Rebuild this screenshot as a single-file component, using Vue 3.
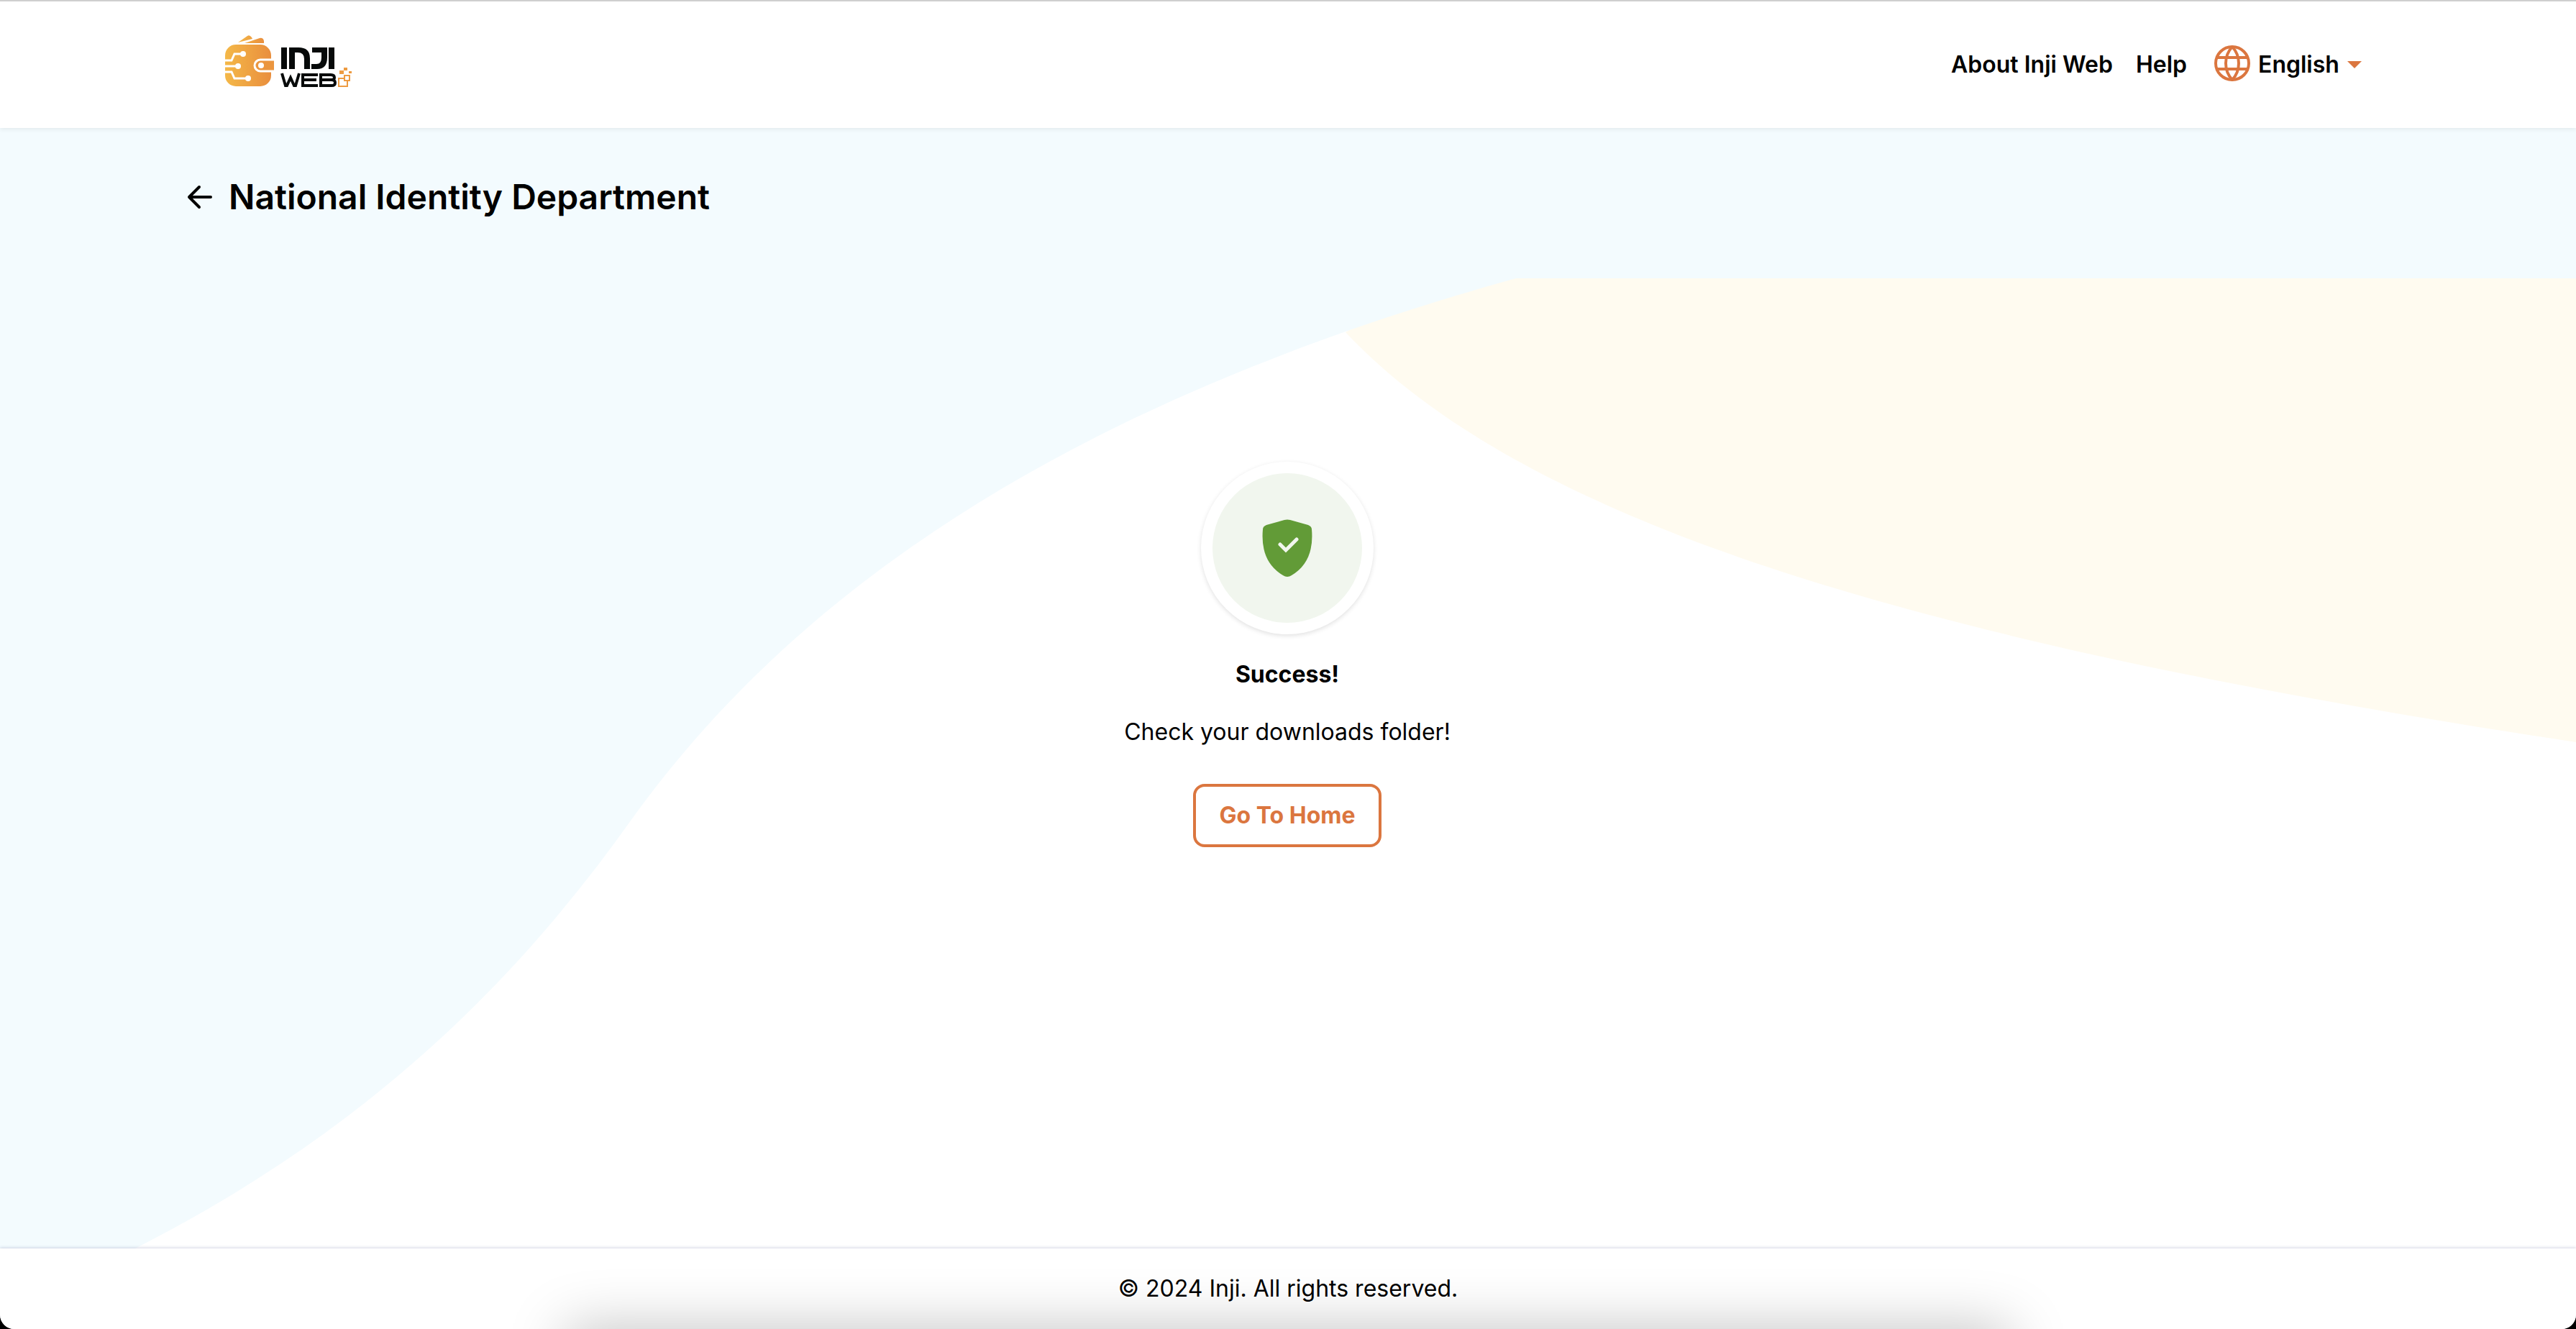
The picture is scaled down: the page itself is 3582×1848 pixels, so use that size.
<script setup>
const year = 2024
const languages = ['English']
</script>

<template>
  <div class="page">
    <header class="header">
      <a class="brand" href="#" aria-label="Inji Web">
        <svg class="logo" viewBox="0 0 180 76" fill="none">
          <defs>
            <linearGradient id="wallet" x1="0" y1="0" x2="1" y2="0">
              <stop offset="0" stop-color="#f4b848" />
              <stop offset="1" stop-color="#e98e3d" />
            </linearGradient>
          </defs>
          <path d="M18 11 31 2q3-2 6 2l1 2zM27 12 48 5q5-1 6 4v3z" fill="url(#wallet)" />
          <rect x="0" y="14" width="64" height="58" rx="15" fill="url(#wallet)" />
          <path d="M68 35H49a8 8 0 0 0 0 16h19" fill="#eb963f" stroke="#fff" stroke-width="3" />
          <path d="M0 36h9l4-9h12M0 44h18M0 52h9l4 9h19" stroke="#fff" stroke-width="3" />
          <g fill="#fff">
            <circle cx="25" cy="27" r="4" />
            <circle cx="18" cy="44" r="4" />
            <circle cx="32" cy="61" r="4" />
            <circle cx="50" cy="43" r="4" />
          </g>
          <g fill="#070a0a">
            <path d="M78 18h8v30h-8zM144 18h8v30h-8z" />
            <path d="M89 48V18h13q16 0 16 15v15h-8V34q0-9-9-9h-4v23z" />
            <path d="M121 18h21v14q0 16-14 16h-8v-7h7q7 0 7-9v-7h-13z" />
          </g>
          <g stroke="#070a0a" stroke-width="4">
            <path d="M79 54l5 17h2l5-11 5 11h2l5-17" />
            <path d="M129 56h-21v15h21M108 63h19" />
            <path d="M133 56h14q5 0 5 4 0 3-4 3h-15M133 54v17h15q5 0 5-4t-5-4" />
          </g>
          <g stroke="#ed9b42" stroke-width="2">
            <rect x="158" y="61" width="12" height="11" />
            <rect x="166" y="57" width="7" height="7" fill="#fff" />
          </g>
          <path d="M159 50h6v5h-6zM165 46h5v4h-5zM172 51h4v3h-4z" fill="#ed9b42" />
        </svg>
      </a>
      <nav class="nav">
        <a href="#about">About Inji Web</a>
        <a href="#help">Help</a>
        <label class="language">
          <svg class="globe" viewBox="0 0 50 50" fill="none" stroke="#db763f" stroke-width="4">
            <circle cx="25" cy="25" r="23" />
            <path d="M25 2C13 15 13 35 25 48C37 35 37 15 25 2M4 17h42M4 33h42" />
          </svg>
          <select aria-label="Language">
            <option v-for="item in languages" :key="item">{{ item }}</option>
          </select>
          <svg class="caret" viewBox="0 0 20 10"><path d="M0 0h20L10 10z" fill="#db763f" /></svg>
        </label>
      </nav>
    </header>

    <div class="title-bar">
      <button class="back" type="button" aria-label="Back">
        <svg viewBox="0 0 36 36" fill="none" stroke="#000" stroke-width="4" stroke-linecap="round" stroke-linejoin="round">
          <path d="M33 18H3M17 4 3 18l14 14" />
        </svg>
      </button>
      <h1>National Identity Department</h1>
    </div>

    <main class="content">
      <svg class="backdrop" viewBox="0 0 3582 1349" preserveAspectRatio="none" aria-hidden="true">
        <path d="M1871 75 2000 0H3582V645C2700 511 2130 350 1871 75Z" fill="#fffbf0" />
        <path d="M0 0H2108C1490 172 1110 431 880 750C710 990 500 1190 188 1349H0Z" fill="#f3fbfe" />
      </svg>
      <section class="result">
        <div class="badge">
          <div class="disc">
            <svg class="shield" viewBox="0 0 70 80">
              <path d="M31 1q4-1 8 0l25 7q5 2 5 6 4 45-28 64-6 4-12 0-32-19-28-64 0-4 5-6z" fill="#629b37" />
              <path d="M25 35l8 8 15-15" fill="none" stroke="#f1f6ee" stroke-width="5" stroke-linecap="round" />
            </svg>
          </div>
        </div>
        <h2>Success!</h2>
        <p>Check your downloads folder!</p>
        <button class="home" type="button">Go To Home</button>
      </section>
    </main>

    <footer class="footer">
      <p>© {{ year }} Inji. All rights reserved.</p>
    </footer>
  </div>
</template>

<style>
body {
  margin: 0;
  background: #000;
}
</style>

<style scoped>
.page {
  display: flex;
  flex-direction: column;
  min-height: 100vh;
  box-sizing: border-box;
  overflow: hidden;
  border-top: 2px solid #cfcfcf;
  border-radius: 0 0 20px 20px;
  background: #fff;
  color: #000;
  font: 400 32px/48px Inter, sans-serif;
}
h1, h2, p {
  margin: 0;
}
.header {
  display: flex;
  align-items: center;
  justify-content: space-between;
  height: 176px;
  box-sizing: border-box;
  padding: 0 298px 0 313px;
  background: #fff;
  box-shadow: 0 2px 6px rgb(0 0 0 / 7%);
  position: relative;
  z-index: 1;
}
.brand {
  display: flex;
  margin-bottom: 8px;
}
.logo {
  width: 180px;
  height: 76px;
}
.nav {
  display: flex;
  align-items: center;
  gap: 32px;
  font-weight: 600;
}
.nav a {
  color: inherit;
  text-decoration: none;
}
.language {
  display: flex;
  align-items: center;
  gap: 11px;
  padding-left: 6px;
}
.globe {
  width: 50px;
  height: 50px;
  margin-bottom: 4px;
}
.language select {
  appearance: none;
  padding: 0;
  border: 0;
  background: transparent;
  color: inherit;
  font: inherit;
}
.caret {
  width: 20px;
  height: 10px;
}
.title-bar {
  display: flex;
  align-items: center;
  gap: 22px;
  height: 209px;
  padding: 0 260px 18px;
  box-sizing: border-box;
  background: #f3fbfe;
}
.back {
  display: flex;
  padding: 0;
  border: 0;
  background: none;
}
.back svg {
  width: 36px;
  height: 36px;
}
h1 {
  font-size: 48px;
  font-weight: 600;
  line-height: 64px;
}
.content {
  display: flex;
  flex: 1;
  justify-content: center;
  position: relative;
}
.backdrop {
  position: absolute;
  inset: 0;
  width: 100%;
  height: 100%;
}
.result {
  display: flex;
  flex-direction: column;
  align-items: center;
  position: relative;
  padding: 255px 2px 0 0;
}
.badge {
  padding: 16px;
  border-radius: 50%;
  background: #fff;
  box-shadow: 0 2px 6px rgb(0 0 0 / 12%);
}
.disc {
  display: flex;
  align-items: center;
  justify-content: center;
  width: 208px;
  height: 208px;
  border-radius: 50%;
  background: #f1f6ee;
}
.shield {
  width: 70px;
  height: 80px;
}
h2 {
  margin-top: 32px;
  font-size: 32px;
  font-weight: 700;
  line-height: 48px;
}
.result p {
  margin-top: 32px;
}
.home {
  margin-top: 48px;
  padding: 16px 32px;
  border: 4px solid #db763f;
  border-radius: 16px;
  background: #fff;
  color: #db763f;
  font: 700 32px/48px Inter, sans-serif;
}
.footer {
  display: flex;
  align-items: center;
  justify-content: center;
  height: 112px;
  background: #fff;
  box-shadow: 0 -1px 4px rgb(40 50 120 / 20%);
  position: relative;
}
.footer::after {
  content: "";
  position: absolute;
  top: 100%;
  left: 22%;
  right: 22%;
  height: 80px;
  box-shadow: 0 0 80px rgb(0 0 0 / 25%);
}
</style>
